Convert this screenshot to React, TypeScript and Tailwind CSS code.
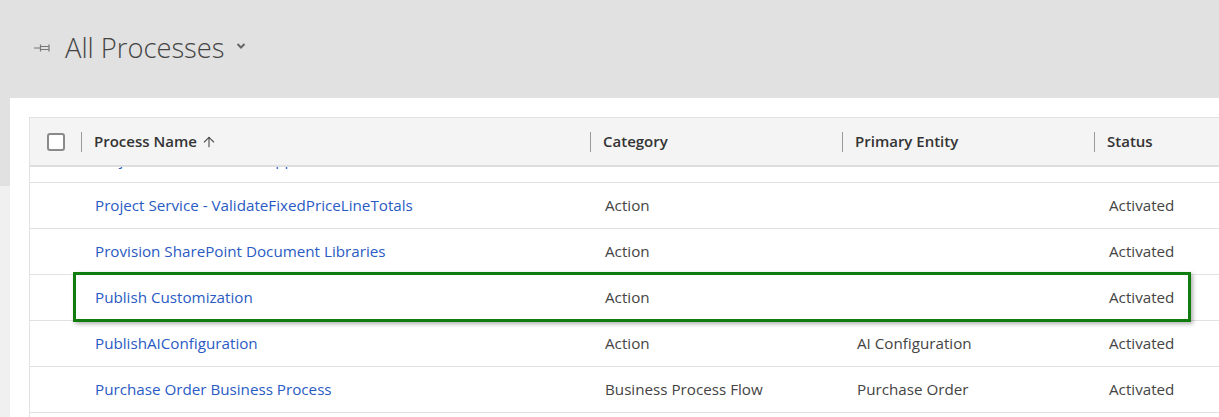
import React from 'react';
import { ArrowUp } from 'lucide-react';

const ROWS = [
  { name: 'Project Service - ValidateFixedPriceLineTotals', category: 'Action', entity: '', status: 'Activated' },
  { name: 'Provision SharePoint Document Libraries', category: 'Action', entity: '', status: 'Activated' },
  { name: 'Publish Customization', category: 'Action', entity: '', status: 'Activated' },
  { name: 'PublishAIConfiguration', category: 'Action', entity: 'AI Configuration', status: 'Activated' },
  { name: 'Purchase Order Business Process', category: 'Business Process Flow', entity: 'Purchase Order', status: 'Activated' },
];

function PinIcon() {
  return (
    <svg width="18" height="10" viewBox="0 0 18 10" className="text-[#777]">
      <path d="M0 5 H6" stroke="currentColor" strokeWidth="1" />
      <path d="M6.5 1.5 V8.5 M6.5 3.5 H14.5 M6.5 6.5 H14.5 M15 1.5 V8.5" stroke="currentColor" strokeWidth="1.2" fill="none" />
    </svg>
  );
}

function Chevron() {
  return (
    <svg width="10" height="8" viewBox="0 0 10 8" className="text-[#666]">
      <path d="M1.5 2 L5 5.5 L8.5 2" stroke="currentColor" strokeWidth="2" fill="none" />
    </svg>
  );
}

function Row({ r }: { r: (typeof ROWS)[number] }) {
  return (
    <div className="flex h-[46px] items-center border-b border-[#e1e1e1] text-[15.2px]">
      <div className="w-[65px] shrink-0" />
      <div className="w-[510px] shrink-0 text-[#2a5bc4]">{r.name}</div>
      <div className="w-[252px] shrink-0 text-[#444]">{r.category}</div>
      <div className="w-[252px] shrink-0 text-[#444]">{r.entity}</div>
      <div className="text-[#444]">{r.status}</div>
    </div>
  );
}

export default function App() {
  return (
    <div
      className="w-[1219px] h-[417px] overflow-hidden bg-[#e1e1e1] relative"
      style={{ fontFamily: '"Open Sans", "Noto Sans", sans-serif' }}
    >
      {/* title bar */}
      <div className="h-[98px] flex items-center pl-[34px] pb-[2px]">
        <PinIcon />
        <span className="ml-[13px] text-[27.3px] font-light text-[#444] leading-none">All Processes</span>
        <span className="ml-[11px] mb-[4px]"><Chevron /></span>
      </div>

      <div className="flex h-[319px]">
        <div className="w-[10px] flex flex-col">
          <div className="h-[88px] bg-[#e1e1e1]" />
          <div className="flex-1 bg-[#f0f0f0]" />
        </div>

        <div className="flex-1 bg-white pt-[19px] pl-[19px]">
          <div className="border-l border-t border-[#e1e1e1] h-full">
            {/* header */}
            <div className="flex h-[49px] items-center bg-[#f4f4f4] border-b-2 border-[#dedede] text-[15px] font-semibold text-[#333]">
              <div className="w-[51px] shrink-0 flex justify-center pl-[2px]">
                <div className="w-[18px] h-[18px] border-2 border-[#8a8a8a] rounded-[3px] bg-white mr-[1px]" />
              </div>
              <div className="w-[509px] shrink-0 flex items-center">
                <div className="w-px h-[20px] bg-[#999] mr-[12px]" />
                <span>Process Name</span>
                <ArrowUp size={16} strokeWidth={1.75} className="ml-[4px] text-[#555]" />
              </div>
              <div className="w-[252px] shrink-0 flex items-center">
                <div className="w-px h-[20px] bg-[#999] mr-[12px]" />
                <span>Category</span>
              </div>
              <div className="w-[252px] shrink-0 flex items-center">
                <div className="w-px h-[20px] bg-[#999] mr-[12px]" />
                <span>Primary Entity</span>
              </div>
              <div className="flex items-center">
                <div className="w-px h-[20px] bg-[#999] mr-[12px]" />
                <span>Status</span>
              </div>
            </div>

            {/* scrolled, partially hidden row */}
            <div className="h-[16px] overflow-hidden border-b border-[#e1e1e1]">
              <div className="flex h-[46px] items-center mt-[-31px] text-[15.2px]">
                <div className="w-[65px] shrink-0" />
                <div className="text-[#2a5bc4]">Project Service - Submit Approvals</div>
              </div>
            </div>

            {ROWS.map((r) => (
              <Row key={r.name} r={r} />
            ))}
          </div>
        </div>
      </div>

      {/* highlight annotation */}
      <div className="absolute left-[73px] top-[272px] w-[1118px] h-[50px] border-[3px] border-[#107c10] shadow-[2px_2px_4px_rgba(0,0,0,0.3)] pointer-events-none" />
    </div>
  );
}
